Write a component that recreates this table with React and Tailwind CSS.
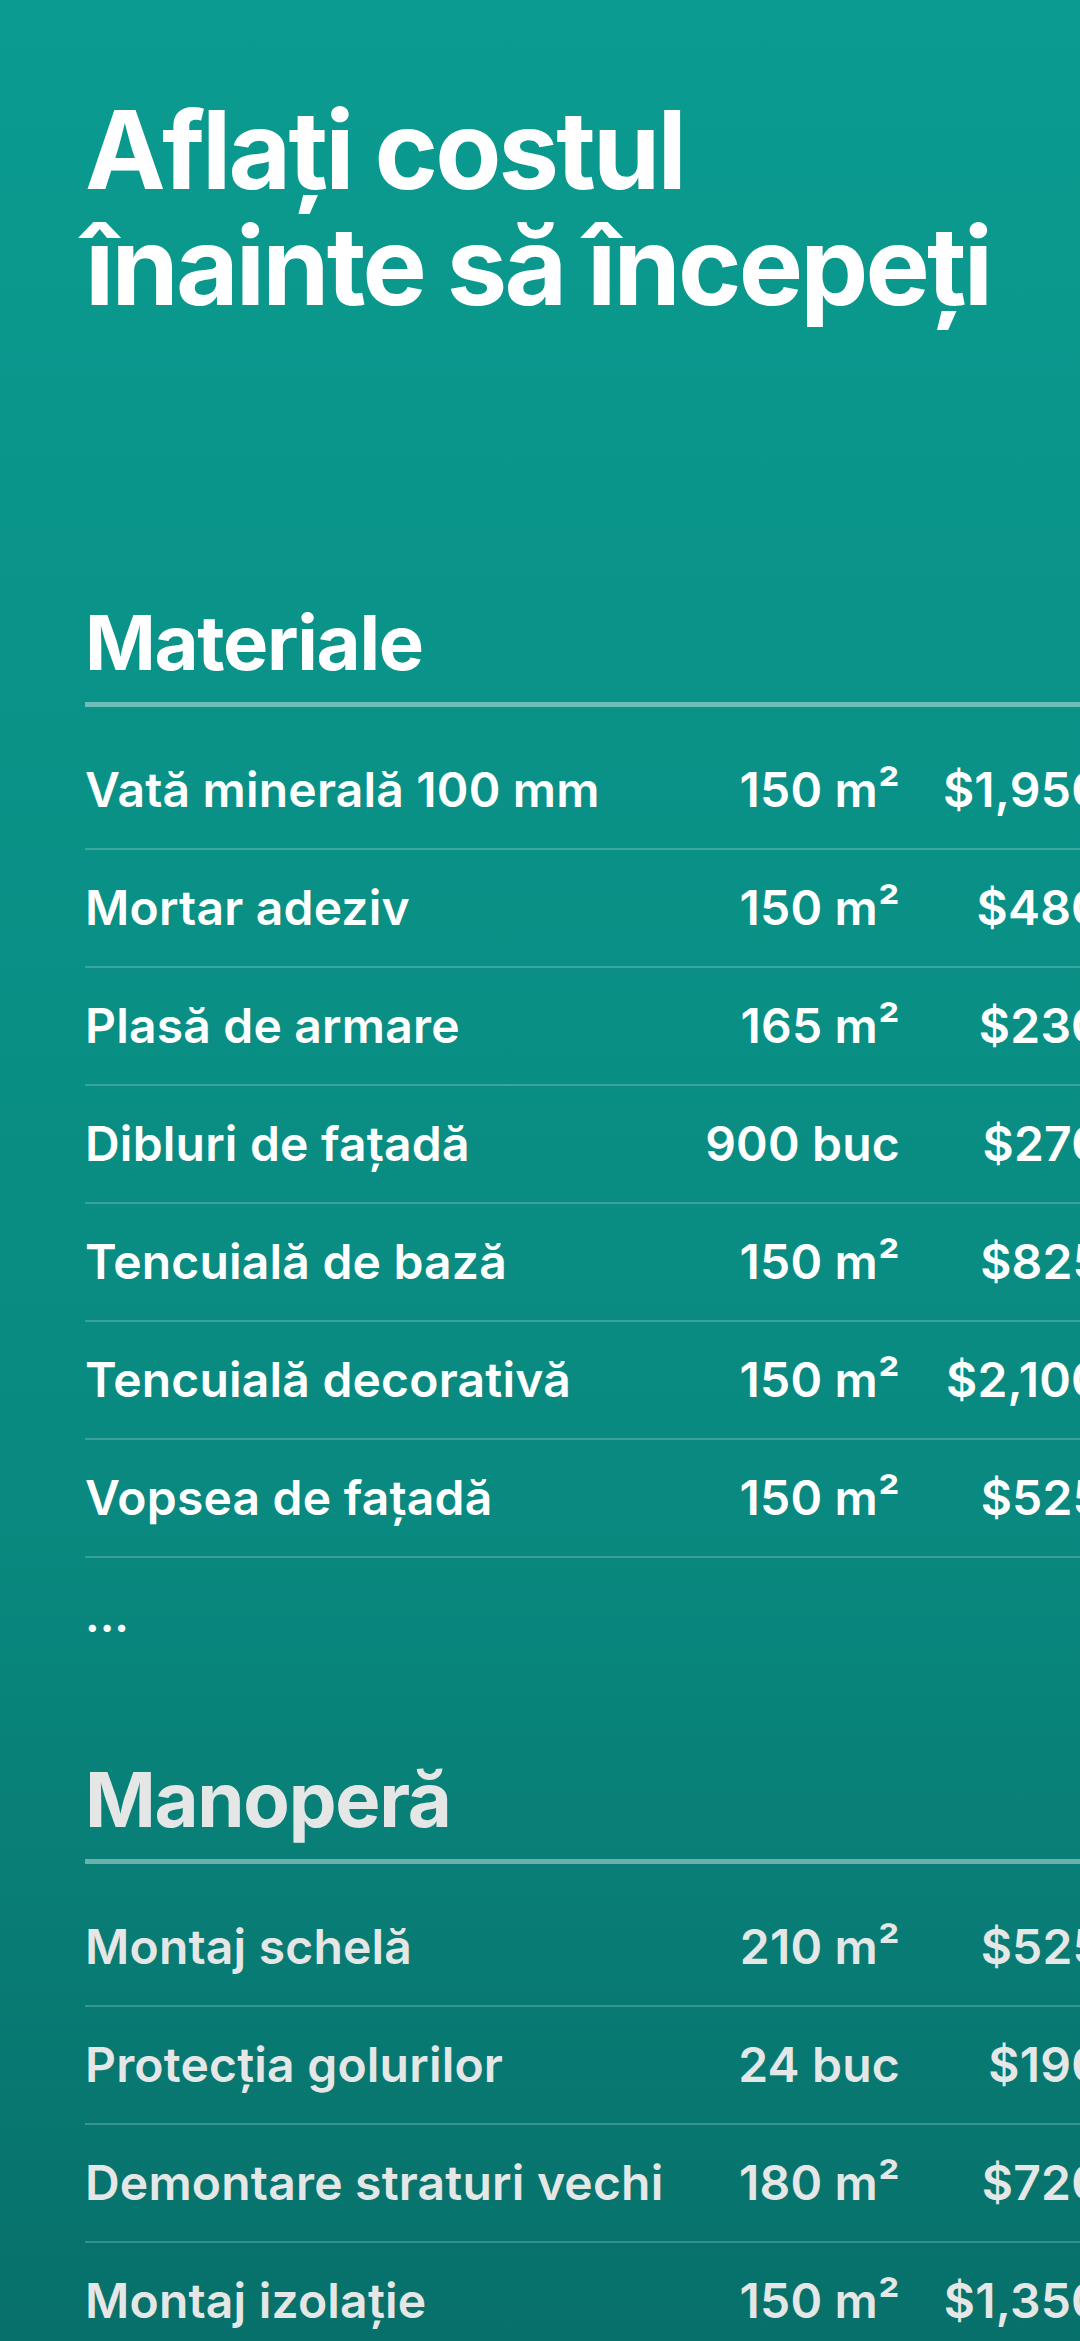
const materiale = [
  { name: 'Vată minerală 100 mm', qty: '150 m²', price: '$1,950' },
  { name: 'Mortar adeziv', qty: '150 m²', price: '$480' },
  { name: 'Plasă de armare', qty: '165 m²', price: '$230' },
  { name: 'Dibluri de fațadă', qty: '900 buc', price: '$270' },
  { name: 'Tencuială de bază', qty: '150 m²', price: '$825' },
  { name: 'Tencuială decorativă', qty: '150 m²', price: '$2,100' },
  { name: 'Vopsea de fațadă', qty: '150 m²', price: '$525' },
];

const manopera = [
  { name: 'Montaj schelă', qty: '210 m²', price: '$525' },
  { name: 'Protecția golurilor', qty: '24 buc', price: '$190' },
  { name: 'Demontare straturi vechi', qty: '180 m²', price: '$720' },
  { name: 'Montaj izolație', qty: '150 m²', price: '$1,350' },
];

const Row = ({ item }) => (
  <div className="grid grid-cols-[1fr_auto_203px] items-center h-[118px] border-b-2 border-white/20">
    <span className="whitespace-nowrap">{item.name}</span>
    <span className="text-right whitespace-nowrap">{item.qty}</span>
    <span className="text-right whitespace-nowrap">{item.price}</span>
  </div>
);

const Section = ({ title, items, className = '' }) => (
  <section className={className}>
    <h2 className="text-[76px] leading-none font-bold tracking-[-1.3px]">{title}</h2>
    <div className="mt-[22px] h-[5px] w-[1100px] bg-white/40" />
    <div className="mt-[25px] w-[1018px] text-[48px] font-semibold tracking-[0.2px]">
      {items.map((item) => (
        <Row key={item.name} item={item} />
      ))}
    </div>
  </section>
);

export default function App() {
  return (
    <div
      className="w-[1080px] h-[2341px] overflow-hidden bg-gradient-to-b from-[#0b9b90] via-[#09897f] via-65% to-[#07706a] text-white pl-[85px] pt-[92px]"
      style={{ fontFamily: 'Inter, "Noto Sans", sans-serif' }}
    >
      <h1 className="text-[108px] leading-[116px] font-bold tracking-[-2.8px]">
        Aflați costul
        <br />
        înainte să începeți
      </h1>

      <Section title="Materiale" items={materiale} className="mt-[280px]" />

      <div className="mt-[34px] text-[46px] leading-none font-semibold">...</div>

      <Section title="Manoperă" items={manopera} className="mt-[123px] text-[#e5e7e7]" />
    </div>
  );
}
